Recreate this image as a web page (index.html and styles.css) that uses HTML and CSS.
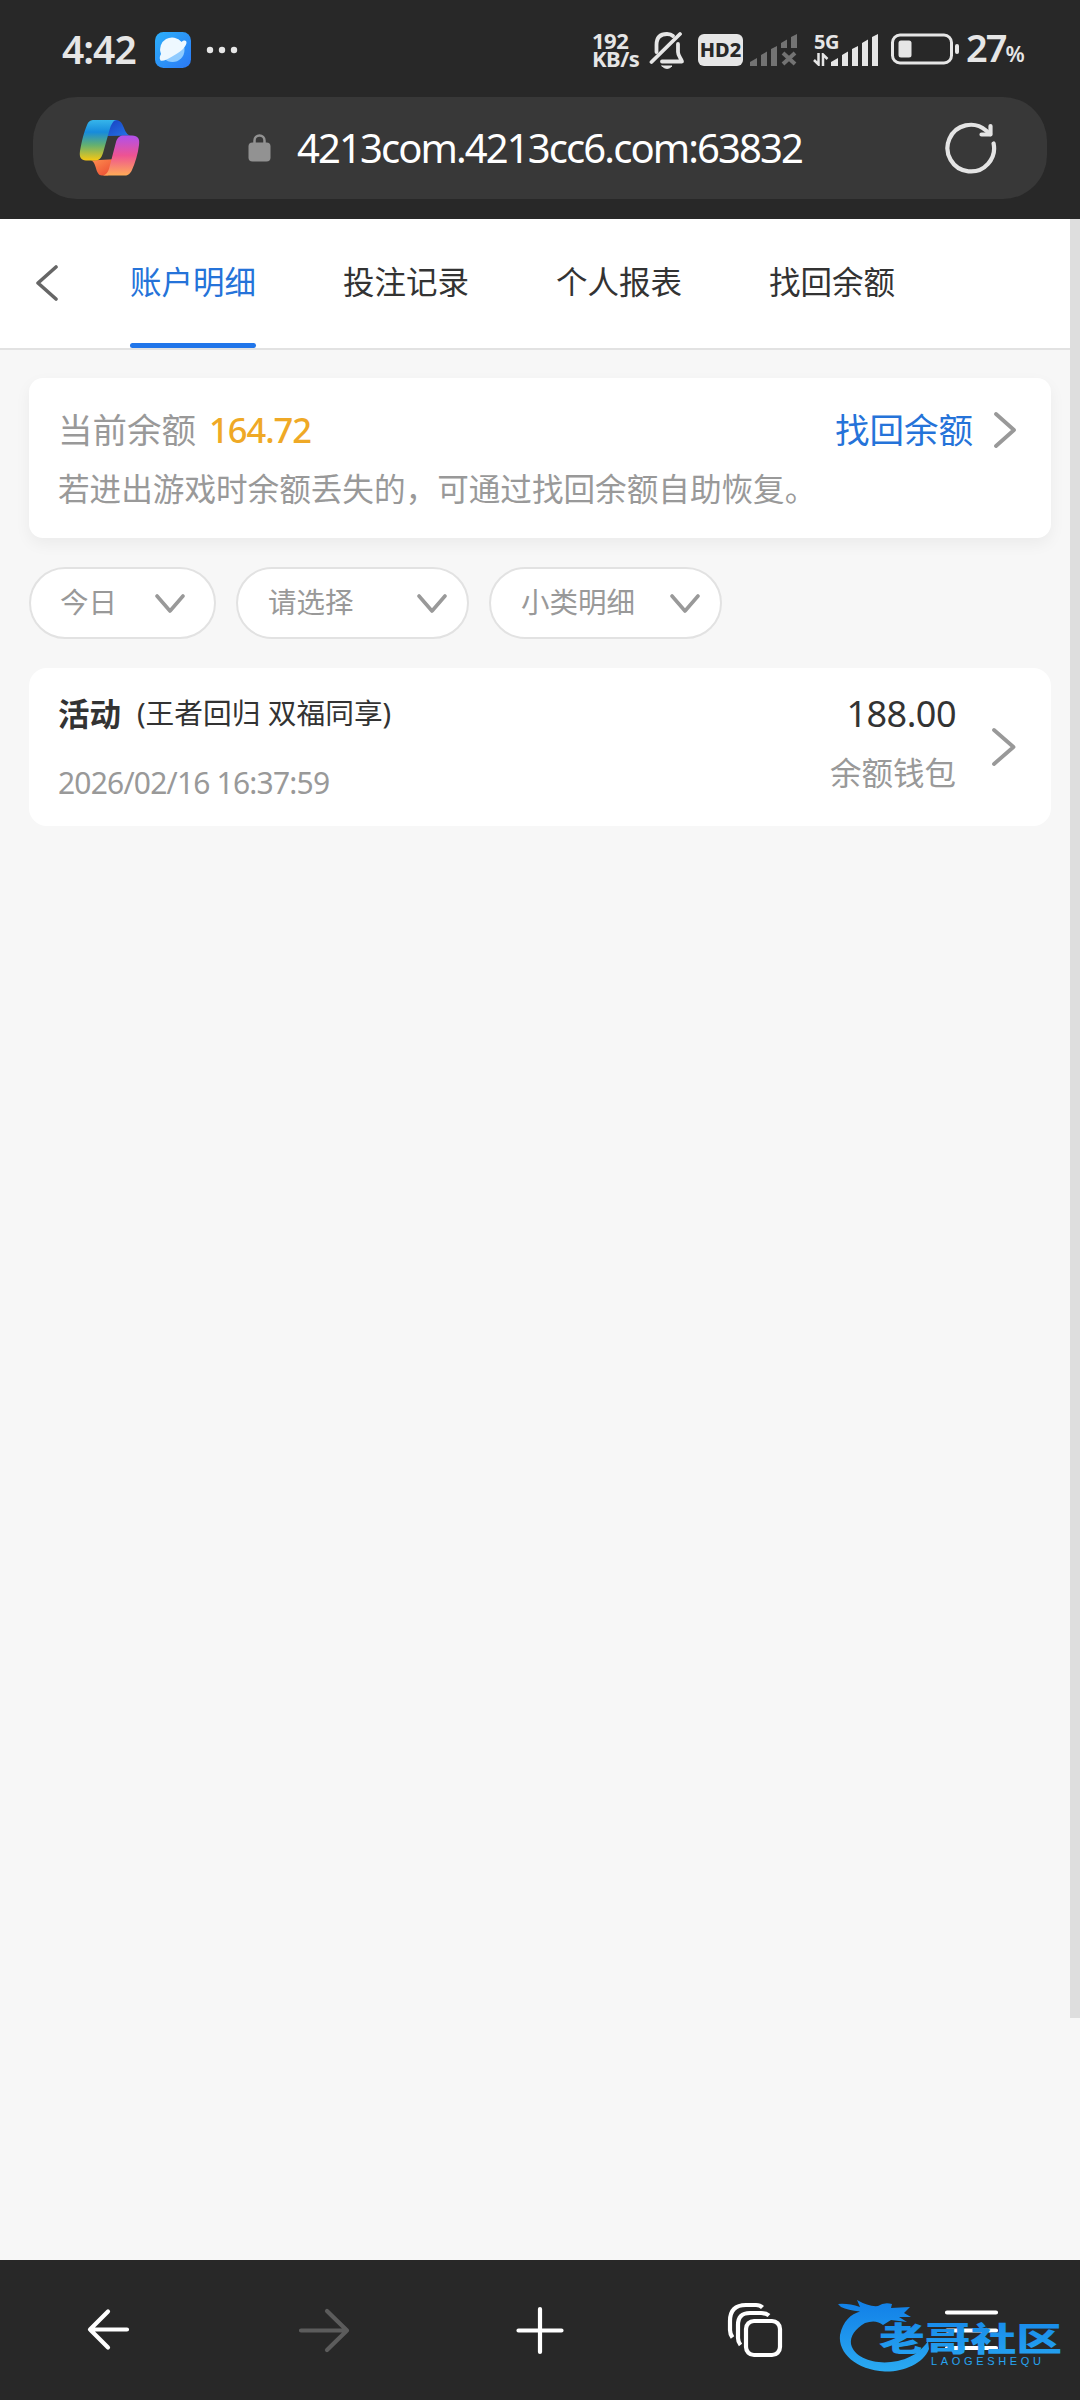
FILE: index.html
```html
<!DOCTYPE html>
<html lang="zh-CN">
<head>
<meta charset="utf-8">
<title>账户明细</title>
<link rel="stylesheet" href="styles.css">
</head>
<body>
<div class="screen">
  <header class="browser-top">
    <div class="status">
      <span class="clock">4:42</span>
      <svg class="app-icon" width="36" height="36" viewBox="0 0 36 36">
        <defs>
          <linearGradient id="app-bg" x1="0" y1="0" x2="1" y2="1"><stop offset="0" stop-color="#2cb0fb"/><stop offset="1" stop-color="#2b78f5"/></linearGradient>
        </defs>
        <rect width="36" height="36" rx="8.5" fill="url(#app-bg)"/>
        <circle cx="17.500" cy="18" r="12" fill="#8fcbff"/>
        <path d="M5.500 28.500C4 26 5 24 6 22A12 12 0 0 1 26.500 10C29 8 31.500 8 31.500 11C30.500 16 25 20 18 24C12 27.500 8 29.500 5.500 28.500Z" fill="#eef8ff"/>
      </svg>
      <svg class="dots" width="32" height="8" viewBox="0 0 32 8" fill="#e6e6e6"><circle cx="4" cy="4" r="3.2"/><circle cx="16" cy="4" r="3.2"/><circle cx="28" cy="4" r="3.2"/></svg>
      <div class="status-right">
        <div class="speed"><span>192</span><span>KB/s</span></div>
        <svg class="bell" width="36" height="40" viewBox="0 0 36 40" fill="none" stroke="#e6e6e6" stroke-width="3.800" stroke-linecap="round" stroke-linejoin="round">
          <path d="M7.500 22V15C7.500 7 12 4 18 4C20.500 4 22.500 4.600 24 6M29 14V22C29 26 32 28 33 31.500H13"/><path d="M2.500 32L31 4"/><path d="M13 36H23Q18 41 13 36Z" fill="#e6e6e6" stroke-width="1"/>
        </svg>
        <span class="hd">HD2</span>
        <svg class="sig-off" width="48" height="32" viewBox="0 0 48 32" fill="#737373">
          <path d="M0 32V28L7 24V32ZM11 32V21L17 17.500V32ZM21 32V15L27 12V32ZM31 14V9L37 5.500V14ZM41 14V3L47 0V14Z"/><path d="M33 19L45 30M45 19L33 30" stroke="#737373" stroke-width="4"/>
        </svg>
        <div class="net"><span>5G</span>
          <svg width="16" height="13" viewBox="0 0 16 13" fill="none" stroke="#e6e6e6" stroke-width="2.500"><path d="M5.500 0V11.500L1 7M10 13V1.500L14.500 6"/></svg>
        </div>
        <svg class="sig" width="48" height="32" viewBox="0 0 48 32" fill="#e6e6e6"><path d="M0 32V28L7 24V32ZM11 32V21L17 17.500V32ZM21 32V15L27 12V32ZM31 32V9L37 5.500V32ZM41 32V3L47 0V32Z"/></svg>
        <svg class="battery" width="70" height="32" viewBox="0 0 70 32"><rect x="1.500" y="2" width="59" height="28" rx="7.500" fill="none" stroke="#e6e6e6" stroke-width="3"/><rect x="7.500" y="7.500" width="13" height="17" rx="2.500" fill="#e6e6e6"/><rect x="64" y="11" width="4" height="10" rx="2" fill="#e6e6e6"/></svg>
        <span class="pct">27<small>%</small></span>
      </div>
    </div>
    <div class="address">
      <svg class="copilot" width="62" height="56" viewBox="0 0 62 56">
        <defs>
          <linearGradient id="cp-a" x1="0" y1="0" x2="0" y2="1"><stop offset="0" stop-color="#36b5ea"/><stop offset=".3" stop-color="#168bdc"/><stop offset=".62" stop-color="#64b070"/><stop offset="1" stop-color="#f8c812"/></linearGradient>
          <linearGradient id="cp-b" x1="0" y1="0" x2="0" y2="1"><stop offset="0" stop-color="#b050ec"/><stop offset=".5" stop-color="#ee5392"/><stop offset="1" stop-color="#ffab57"/></linearGradient>
          <linearGradient id="cp-c" x1="0" y1="0" x2="1" y2="1"><stop offset="0" stop-color="#173fc0"/><stop offset="1" stop-color="#2676e8"/></linearGradient>
          <linearGradient id="cp-d" x1="0" y1="0" x2="1" y2="1"><stop offset="0" stop-color="#ff9050"/><stop offset="1" stop-color="#e8432f"/></linearGradient>
        </defs>
        <path d="M27 0H37C46 0 44 15 52 15.500L29 16Z" fill="url(#cp-c)"/>
        <path d="M12 40.500L38 39L29 55.500H23C16 55.500 18 42 12 40.500Z" fill="url(#cp-d)"/>
        <path d="M15 0H38C34 0 32 5 30.500 10L24 33C22 39 20 40.500 15 40.500H7C2 40.500 0 37 1 31C3 20 5 12 8 5C9.500 1 12 0 15 0Z" fill="url(#cp-a)"/>
        <path d="M45 15.500H53C59 15.500 61 19 60 25C59 34 56 43 53 50C51 54 49 55.500 46 55.500H24C28 55 30 50 31 45L37 22C38.500 17 41 15.500 45 15.500Z" fill="url(#cp-b)"/>
      </svg>
      <svg class="lock" width="23" height="28" viewBox="0 0 23 28"><path d="M6.500 12V6.500a5 5 0 0 1 10 0V12" fill="none" stroke="#929292" stroke-width="2.500"/><rect x="0.500" y="8.500" width="22" height="19" rx="4" fill="#929292"/></svg>
      <span class="url">4213com.4213cc6.com:63832</span>
      <svg class="reload" width="52" height="52" viewBox="0 0 52 52" fill="none" stroke="#e4e4e4" stroke-width="4.200" stroke-linecap="round" stroke-linejoin="round"><path d="M48.600 21.500A23.300 23.300 0 1 1 41 8.500L45 12"/><path d="M45.500 4V12.500H36.500"/></svg>
    </div>
  </header>

  <main class="page">
    <div class="content">
      <nav class="tabs">
        <svg class="back" width="22" height="36" viewBox="0 0 22 36"><path d="M20 2L2 18L20 34" fill="none" stroke="#666" stroke-width="3.600" stroke-linecap="round" stroke-linejoin="round"/></svg>
        <a class="tab active">账户明细</a><a class="tab">投注记录</a><a class="tab">个人报表</a><a class="tab">找回余额</a>
      </nav>
      <section class="card balance">
        <div class="balance-row">
          <span class="label">当前余额</span><span class="amount">164.72</span>
          <a class="recover">找回余额</a>
          <svg class="go" width="24" height="36" viewBox="0 0 24 36"><path d="M3 2L21 18L3 34" fill="none" stroke="#999" stroke-width="3.800" stroke-linecap="round" stroke-linejoin="round"/></svg>
        </div>
        <p class="hint">若进出游戏时余额丢失的，可通过找回余额自助恢复。</p>
      </section>
      <div class="filters">
        <div class="pill day"><span>今日</span><svg width="30" height="20" viewBox="0 0 30 20"><path d="M2 2L15 17L28 2"/></svg></div>
        <div class="pill kind"><span>请选择</span><svg width="30" height="20" viewBox="0 0 30 20"><path d="M2 2L15 17L28 2"/></svg></div>
        <div class="pill sub"><span>小类明细</span><svg width="30" height="20" viewBox="0 0 30 20"><path d="M2 2L15 17L28 2"/></svg></div>
      </div>
      <section class="card record">
        <div class="record-main">
          <div class="title"><b>活动</b><span>(王者回归 双福同享)</span></div>
          <time>2026/02/16 16:37:59</time>
        </div>
        <div class="record-side"><span class="sum">188.00</span><span class="wallet">余额钱包</span></div>
        <svg class="go" width="26" height="40" viewBox="0 0 26 40"><path d="M3 3L22.500 20L3 37" fill="none" stroke="#999" stroke-width="3.800" stroke-linecap="round" stroke-linejoin="round"/></svg>
      </section>
    </div>
    <div class="scrollbar"></div>
  </main>

  <footer class="toolbar">
    <svg width="60" height="60" viewBox="0 0 60 60"><path d="M49 29.500H12M30 11.500L12 29.500L30 47.500"/></svg>
    <svg class="disabled" width="60" height="60" viewBox="0 0 60 60"><path d="M7 30.500H53M33 11L53 30.500L33 50"/></svg>
    <svg width="60" height="60" viewBox="0 0 60 60"><path d="M30 9V52M8.500 30.500H51.500"/></svg>
    <svg width="60" height="60" viewBox="0 0 60 60"><rect x="20" y="21" width="34" height="34" rx="8"/><path d="M14.500 45Q12 42 12 38V25Q12 13 24 13H35Q40 13 43 15.500M6.500 37.500Q4 34 4 30V21Q4 5 20 5H30Q34 5 36.500 7.500" stroke-linecap="butt"/></svg>
    <svg width="60" height="60" viewBox="0 0 60 60"><path d="M5 12.500H54M5 30.500H54M5 48H54"/></svg>
  </footer>
  <svg class="watermark" width="240" height="90" viewBox="0 0 240 90">
    <defs><linearGradient id="wm" x1="0" y1="10" x2="0" y2="87" gradientUnits="userSpaceOnUse"><stop offset="0" stop-color="#0f7be6"/><stop offset="1" stop-color="#2aaaf2"/></linearGradient></defs>
    <g fill="url(#wm)">
      <path d="M7 20Q17 19 29 23L26 16Q38 23 47 22Q53 18 61 20L60 24L79 23L73 29L80 33H68L76 38L60 36L52 41Q45 35 34 39C24 45 19 52 20 60C23 74 43 80 60 78C80 76 91 66 97 57L98 65C92 80 72 88 54 87.500C25 86 7 69 9 51C12 37 20 30 29 27.500Q17 26 10 23Z"/>
      <text class="wm-name" x="48" y="67" textLength="183" lengthAdjust="spacingAndGlyphs">老哥社区</text>
      <text class="wm-latin" x="100" y="81" textLength="110">LAOGESHEQU</text>
    </g>
  </svg>
</div>
</body>
</html>
```
FILE: styles.css
```css
* { box-sizing: border-box; }
body {
  margin: 0;
  font-family: "Noto Sans", "Noto Sans CJK SC", sans-serif;
  color: #333;
}
.screen {
  position: relative;
  width: 1080px;
  height: 2400px;
  display: flex;
  flex-direction: column;
  background: #f7f7f7;
  overflow: hidden;
}
svg { display: block; flex: none; }
span, a, b, time { white-space: nowrap; }

.browser-top { height: 219px; background: #282828; flex: none; }
.status {
  height: 97px;
  padding: 0 50px 0 62px;
  display: flex;
  align-items: center;
  color: #e6e6e6;
}
.clock { width: 77px; font: 600 39px/50px "Noto Sans"; letter-spacing: -1px; }
.app-icon { margin: 2px 15px 0 16px; }
.dots { margin-top: 2px; }
.status-right { margin-left: auto; display: flex; align-items: center; }
.speed {
  width: 57px;
  display: flex;
  flex-direction: column;
  font: 700 22px/18px "Noto Sans";
  letter-spacing: -.5px;
}
.bell { margin: 3px 13px 0 0; }
.hd {
  width: 45px;
  height: 32px;
  margin: 2px 7px 0 0;
  border-radius: 6px;
  background: #e6e6e6;
  color: #282828;
  font: 800 20px/32px "Noto Sans";
  text-align: center;
}
.sig-off { margin: 2px 15px 0 0; }
.net { width: 18px; height: 32px; font: 700 20px/17px "Noto Sans"; }
.net span { display: block; margin-left: 1px; letter-spacing: -.5px; }
.net svg { margin-top: 3px; }
.sig { margin: 2px 12px 0 0; }
.battery { margin-top: 1px; }
.pct { width: 64px; margin-left: 5px; font: 600 38px/50px "Noto Sans"; letter-spacing: -2px; padding-top: 2px; }
.pct small { font-size: 22px; }

.address {
  height: 102px;
  margin: 0 33px;
  padding: 0 50px 0 46px;
  display: flex;
  align-items: center;
  border-radius: 44px;
  background: #383838;
}
.lock { margin: 0 26px 0 107px; }
.url { font: 400 40px/60px "Noto Sans"; color: #fff; letter-spacing: -1.9px; }
.reload { margin-left: auto; }

.page { flex: 1; display: flex; align-items: flex-start; }
.content { flex: 1; }
.scrollbar { width: 10px; height: 1799px; background: #dedede; }
.tabs {
  height: 131px;
  display: flex;
  align-items: stretch;
  gap: 87px;
  padding-left: 36px;
  background: #fff;
  border-bottom: 2px solid #e2e2e2;
}
.back { align-self: center; margin: 0 -15px 2px 0; }
.tab {
  font-size: 31.5px;
  line-height: 126px;
}
.tab.active { color: #2573d9; position: relative; }
.tab.active::after {
  content: "";
  position: absolute;
  left: 0;
  right: 0;
  bottom: 0;
  height: 5px;
  border-radius: 3px;
  background: #2176ea;
}

.card { margin: 0 19px 0 29px; background: #fff; }
.balance {
  height: 160px;
  margin-top: 28px;
  padding: 27px 30px 0 29px;
  border-radius: 14px;
  box-shadow: 0 6px 16px rgba(0, 0, 0, .05);
  color: #999;
}
.balance-row { height: 50px; display: flex; align-items: center; font-size: 34.5px; line-height: 50px; }
.amount { margin-left: 13px; color: #efa926; font-weight: 500; letter-spacing: -1px; }
.recover { margin-left: auto; color: #2573d9; }
.balance .go { margin: 0 4px 0 20px; }
.hint { margin: 9px 0 0; font-size: 31.6px; line-height: 50px; white-space: nowrap; }

.filters { display: flex; gap: 20px; margin: 29px 0 29px 29px; }
.pill {
  height: 72px;
  padding: 0 30px 2px;
  display: flex;
  align-items: center;
  justify-content: space-between;
  border: 2px solid #e2e2e2;
  border-radius: 36px;
  background: #fff;
  color: #999;
  font-size: 28.5px;
}
.pill span { margin-bottom: 3px; }
.pill svg { margin-top: 3px; fill: none; stroke: #999; stroke-width: 3.6; stroke-linecap: round; stroke-linejoin: round; }
.day { width: 187px; padding: 0 29px 2px 29px; }
.kind { width: 233px; padding-right: 20px; }
.sub { width: 233px; padding-right: 20px; }

.record {
  height: 158px;
  padding: 0 34px 0 29px;
  display: flex;
  border-radius: 18px;
}
.record-main { flex: 1; }
.title { height: 50px; margin-top: 19px; display: flex; align-items: center; gap: 16px; font-size: 28.7px; }
.title b { font-size: 31.5px; }
.title span { margin-bottom: 2px; }
time { display: block; margin-top: 21px; font-size: 30px; line-height: 50px; letter-spacing: -.8px; color: #999; }
.record-side { display: flex; flex-direction: column; align-items: flex-end; padding-top: 21px; margin-right: 35px; }
.sum { font-size: 36px; line-height: 50px; letter-spacing: -.5px; }
.wallet { margin-top: 9px; font-size: 31.5px; line-height: 50px; color: #999; }
.record .go { align-self: center; }

.toolbar {
  height: 140px;
  flex: none;
  display: flex;
  padding: 40px 0 0;
  justify-content: space-around;
  background: #282828;
}
.toolbar svg { fill: none; stroke: #fff; stroke-width: 4.2; stroke-linecap: round; stroke-linejoin: round; }
.toolbar .disabled { stroke: #5c5c5c; }
.watermark { position: absolute; left: 831px; top: 2284px; }
.wm-name { font: 900 33px "Noto Sans CJK SC"; }
.wm-latin { font: 400 11px "Liberation Sans"; }
```
